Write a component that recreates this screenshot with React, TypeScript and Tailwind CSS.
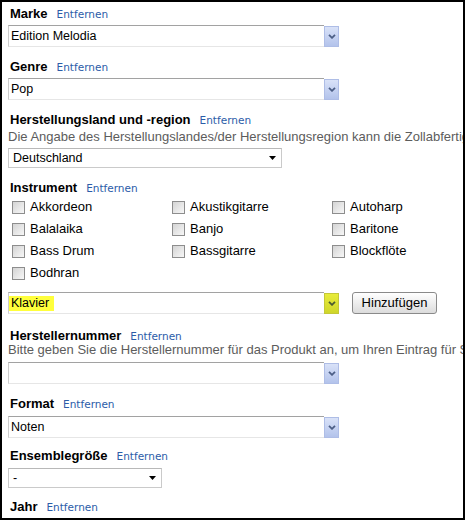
import React from 'react';

const instruments = [
    "Akkordeon", "Akustikgitarre", "Autoharp",
    "Balalaika", "Banjo", "Baritone",
    "Bass Drum", "Bassgitarre", "Blockflöte",
    "Bodhran"
];

const Label = ({ text, mt }: { text: string; mt: string }) => (
    <div className={`flex items-baseline pl-[2px] h-[16px] leading-[16px] whitespace-nowrap ${mt}`}>
        <span className="text-[13px] font-bold text-black">{text}</span>
        <a className="ml-[9px] text-[10.5px] text-[#2b5ca8] font-['DejaVu_Sans',Verdana,sans-serif] cursor-pointer">Entfernen</a>
    </div>
);

const Chevron = ({ color }: { color: string }) => (
    <svg width="8" height="5" viewBox="0 0 8 5">
        <polyline points="1,0.8 4,3.8 7,0.8" fill="none" stroke={color} strokeWidth="1.8" />
    </svg>
);

const Combo = ({ value, highlight, mt }: { value: string; highlight?: boolean; mt: string }) => (
    <div className={`flex w-[331px] h-[22px] ${mt}`}>
        <div className="flex-1 flex items-center bg-white border-t border-l border-b border-t-[#a2a2a2] border-l-[#cdcdcd] border-b-[#e6e6e6] text-[12.5px] text-black">
            {highlight ? (
                <span className="bg-[#ffff3c] h-[15px] leading-[15px] pl-[2px] pr-[5px]">{value}</span>
            ) : (
                <span className="pl-[2px]">{value}</span>
            )}
        </div>
        {highlight ? (
            <div className="self-end w-[15px] h-[21px] flex items-center justify-center border border-[#c4c838] bg-gradient-to-b from-[#e8ec3a] to-[#cfd62a]">
                <Chevron color="#4a5a30" />
            </div>
        ) : (
            <div className="self-end w-[15px] h-[21px] flex items-center justify-center border border-[#aebde6] bg-gradient-to-b from-[#d9e2f8] to-[#b3c3eb]">
                <Chevron color="#4c5f86" />
            </div>
        )}
    </div>
);

const NativeSelect = ({ value, width, mt }: { value: string; width: string; mt: string }) => (
    <div className={`flex items-center justify-between h-[20px] bg-white border border-[#cacaca] border-t-[#b8b8b8] pl-[4px] pr-[5px] text-[12.5px] text-black ${width} ${mt}`}>
        <span>{value}</span>
        <svg width="7" height="4" viewBox="0 0 7 4">
            <polygon points="0,0 7,0 3.5,4" fill="#000" />
        </svg>
    </div>
);

const Desc = ({ text, mt }: { text: string; mt: string }) => (
    <div className={`text-[13px] leading-[16px] text-[#5c5c5c] whitespace-nowrap ${mt}`}>{text}</div>
);

const App: React.FC = () => {
    return (
        <div className="w-[465px] h-[520px] border-2 border-black bg-white overflow-hidden pl-[6px] font-['Liberation_Sans',Arial,sans-serif]">
            <Label text="Marke" mt="mt-[4px]" />
            <Combo value="Edition Melodia" mt="mt-[3px]" />

            <Label text="Genre" mt="mt-[12px]" />
            <Combo value="Pop" mt="mt-[3px]" />

            <Label text="Herstellungsland und -region" mt="mt-[12px]" />
            <Desc text="Die Angabe des Herstellungslandes/der Herstellungsregion kann die Zollabfertigung beschleunigen." mt="mt-[1px]" />
            <NativeSelect value="Deutschland" width="w-[274px]" mt="mt-[3px]" />

            <Label text="Instrument" mt="mt-[12px]" />
            <div className="grid grid-cols-[160px_160px_120px] pl-[4px]">
                {instruments.map((name) => (
                    <label key={name} className="flex items-center h-[22px] gap-[5px] text-[13px] text-black whitespace-nowrap">
                        <span className="w-[13px] h-[13px] border border-[#8d8d8d] bg-gradient-to-br from-[#d4d4d4] to-[#f7f7f7]" />
                        {name}
                    </label>
                ))}
            </div>

            <div className="flex items-center mt-[8px]">
                <Combo value="Klavier" highlight mt="mt-0" />
                <button className="ml-[13px] w-[85px] h-[22px] rounded-[3px] border border-[#8a8a8a] bg-gradient-to-b from-[#ffffff] to-[#dcdcdc] text-[13px] text-black">
                    Hinzufügen
                </button>
            </div>

            <Label text="Herstellernummer" mt="mt-[14px]" />
            <Desc text="Bitte geben Sie die Herstellernummer für das Produkt an, um Ihren Eintrag für Suchen zu verbessern." mt="mt-[-2px]" />
            <Combo value="" mt="mt-[4px]" />

            <Label text="Format" mt="mt-[12px]" />
            <Combo value="Noten" mt="mt-[4px]" />

            <Label text="Ensemblegröße" mt="mt-[10px]" />
            <NativeSelect value="-" width="w-[154px]" mt="mt-[4px]" />

            <Label text="Jahr" mt="mt-[11px]" />
        </div>
    );
};

export default App;
